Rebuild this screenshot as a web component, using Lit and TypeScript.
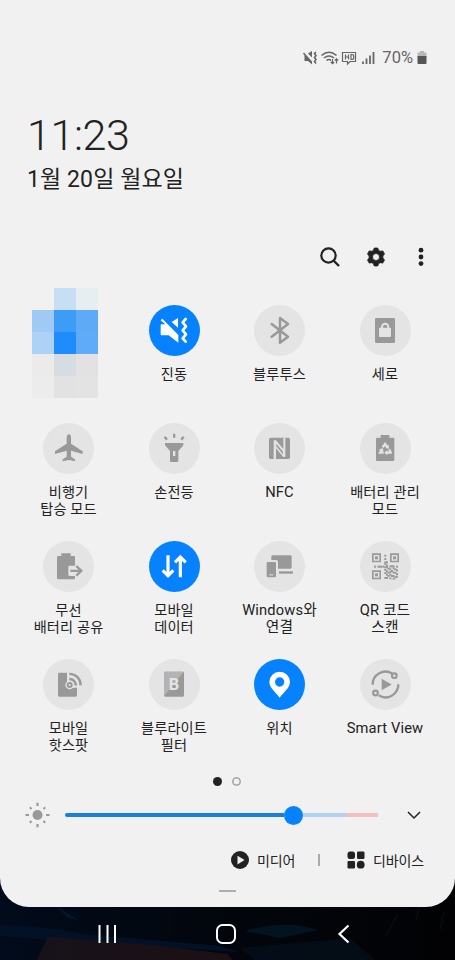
import { LitElement, html, svg, css } from "lit";
import type { SVGTemplateResult } from "lit";
import { customElement, property } from "lit/decorators.js";
import { classMap } from "lit/directives/class-map.js";

/* Tile glyphs share a 153-unit box; "g" is the glyph colour, "b" the disc colour. */
const finder = (x: number, y: number) => svg`
  <path class="g" fill-rule="evenodd" d="M${x} ${y}h27v27h-27zM${x + 5} ${y + 5}v17h17v-17z"/>
  <rect class="g" x="${x + 9}" y="${y + 9}" width="9" height="9"/>`;

const qrDots: number[][] = [
  [73, 41], [73, 51], [73, 61], [78, 61], [73, 66], [78, 71],
  [42, 74], [52, 74], [57, 74], [62, 74], [73, 76], [68, 74],
  [78, 76], [88, 73], [93, 73], [98, 73], [83, 80], [88, 82], [98, 79],
  [108, 74], [103, 82], [108, 85], [73, 84], [78, 88], [73, 93],
  [83, 92], [88, 90], [93, 87], [98, 92], [103, 92], [108, 96],
  [78, 98], [83, 102], [88, 98], [93, 102], [98, 102], [103, 106],
  [73, 108], [78, 108], [88, 109], [98, 110], [108, 104],
];

const glyphs: Record<string, SVGTemplateResult> = {
  vibrate: svg`
    <path class="g" d="M68 51L87 39V68zM37 58H49L35 46L40 41L88 90V113L59 91H37Q35 91 35 88V61Q35 58 37 58z"/>
    <path class="s" stroke-width="8" stroke-linejoin="round" stroke-linecap="round" d="M110 42L101 52L111 64L101 76L111 88L101 100L110 110"/>`,
  bluetooth: svg`<path class="s" stroke-width="7.500" stroke-linejoin="round" stroke-linecap="round" d="M53 57L102 95L78 113V39L102 57L53 95"/>`,
  rotate: svg`
    <rect class="g" x="45" y="39" width="60" height="75" rx="4"/>
    <rect class="b" x="57" y="68" width="36" height="28" rx="2"/>
    <path class="sb" stroke-width="6" d="M66 70V66a9.500 9.500 0 0 1 19 0V70"/>`,
  plane: svg`<path class="g" d="M78 34c5 0 6 6 6 10V62L119 85V93L84 83V101L96 109V115L78 111L59 115V109L71 101V83L36 93V85L71 62V44c0-4 2-10 7-10z"/>`,
  torch: svg`
    <path class="s" stroke-width="7" d="M75.500 32V44M47 41L54 50M104 41L97 50"/>
    <path class="g" fill-rule="evenodd" d="M48 60H103V67L88 84V113Q88 117 84 117H67Q63 117 63 113V84L48 67zM72 84V99H79V84z"/>`,
  nfc: svg`
    <rect class="g" x="45" y="44" width="63" height="64" rx="5"/>
    <path class="b" d="M59 108V52H66L88 78V44H94V102H88L66 76V108z"/>
    <path class="g" d="M67 62L87 86V94L67 70z"/>`,
  care: svg`
    <path class="g" d="M62 36H88V44H100Q103 44 103 47V111Q103 114 100 114H51Q48 114 48 111V47Q48 44 51 44H62z"/>
    <path class="sb" stroke-width="7" d="M68 73L75 63L82 72M88 79L92 89H79M71 89H60L64 80"/>
    <path class="b" d="M76 75L87 77L86 65zM82 81V97L73 89zM57 80L68 75L71 86z"/>`,
  share: svg`
    <path class="g" d="M55 37H83V45H93Q96 45 96 49V111Q96 115 92 115H46Q42 115 42 111V49Q42 45 46 45H55z"/>
    <path class="b" d="M80 74H105V105H80Q76 105 76 101V78Q76 74 80 74z"/>
    <path class="s" stroke-width="7" d="M82 89.500H114M100 75L115 89.500L100 104"/>`,
  data: svg`<path class="s" stroke-width="9.500" d="M57 43V104M41 88L57 104L73 88M94 109V48M78 64L94 48L110 64"/>`,
  windows: svg`
    <rect class="g" x="52" y="43" width="61" height="40" rx="4"/>
    <rect class="b" x="33" y="57" width="39" height="56" rx="6"/>
    <rect class="g" x="38" y="63" width="28" height="46" rx="4"/>
    <rect class="b" x="46" y="100" width="12" height="3"/>
    <rect class="g" x="75" y="91" width="42" height="7"/>`,
  qr: svg`${finder(36, 37)}${finder(90, 37)}${finder(36, 88)}
    ${qrDots.map(([x, y]) => svg`<rect class="g" x="${x}" y="${y}" width="6" height="6"/>`)}`,
  hotspot: svg`
    <path class="g" d="M49 41H72V113H49Q45 113 45 109V45Q45 41 49 41zM70 86H102V109Q102 113 98 113H70z"/>
    <circle class="b" cx="80" cy="78" r="13"/>
    <circle class="s" cx="80" cy="78" r="6" stroke-width="6"/>
    <path class="s" stroke-width="7" d="M79 60A18 18 0 0 1 98 80M79 44.500A33.500 33.500 0 0 1 113 79"/>`,
  filter: svg`
    <rect class="g" x="45" y="38" width="60" height="75" rx="4"/>
    <path fill="#b3b3b3" d="M49 38H104L45 112V42Q45 38 49 38z"/>
    <text class="b letter" x="75" y="94" text-anchor="middle">B</text>`,
  pin: svg`<path class="g" fill-rule="evenodd" d="M77 38A31 31 0 0 1 108 69C108 86 88 101 77 116C66 101 46 86 46 69A31 31 0 0 1 77 38zM77 55A14 14 0 1 0 77 83A14 14 0 1 0 77 55z"/>`,
  smart: svg`
    <path class="s" stroke-width="7" d="M38 77A38.500 38.500 0 0 1 97 44M115 76A38.500 38.500 0 0 1 56 109"/>
    <circle class="s" cx="103" cy="50" r="7" stroke-width="6.500"/>
    <circle class="s" cx="46.500" cy="102" r="7" stroke-width="6.500"/>
    <path class="g" d="M65 59L95 76.500L65 94z"/>`,
};

@customElement("quick-tile")
class QuickTile extends LitElement {
  @property() icon = "";
  @property({ attribute: false }) lines: string[] = [];
  @property({ type: Boolean }) on = false;

  static styles = css`
    :host { display: flex; flex-direction: column; align-items: center; gap: 10px; }
    .disc { display: block; width: 51px; height: 51px; border-radius: 50%; background: #e4e4e4; --g: #999; --b: #e4e4e4; }
    .disc.on { background: #0682fe; --g: #fff; --b: #0682fe; }
    svg { display: block; width: 51px; height: 51px; }
    .g { fill: var(--g); }
    .b { fill: var(--b); }
    .s { fill: none; stroke: var(--g); }
    .sb { fill: none; stroke: var(--b); }
    .letter { font: 700 49px Roboto, sans-serif; }
    .label { text-align: center; white-space: nowrap; font-size: 14.200px; letter-spacing: .15px; line-height: 17px; color: #222; }
    .label.latin { font-size: 14.700px; }
    .line { display: block; }
  `;

  render() {
    const latin = /^[A-Za-z]/.test(this.lines[0] ?? "");
    return html`
      <div class=${classMap({ disc: true, on: this.on })}>
        <svg viewBox="0 0 153 153">${glyphs[this.icon]}</svg>
      </div>
      <div class=${classMap({ label: true, latin })}>${this.lines.map((l) => html`<span class="line">${l}</span>`)}</div>`;
  }
}
void QuickTile;

const tiles = [
  { icon: "vibrate", lines: ["진동"], on: true },
  { icon: "bluetooth", lines: ["블루투스"] },
  { icon: "rotate", lines: ["세로"] },
  { icon: "plane", lines: ["비행기", "탑승 모드"] },
  { icon: "torch", lines: ["손전등"] },
  { icon: "nfc", lines: ["NFC"] },
  { icon: "care", lines: ["배터리 관리", "모드"] },
  { icon: "share", lines: ["무선", "배터리 공유"] },
  { icon: "data", lines: ["모바일", "데이터"], on: true },
  { icon: "windows", lines: ["Windows와", "연결"] },
  { icon: "qr", lines: ["QR 코드", "스캔"] },
  { icon: "hotspot", lines: ["모바일", "핫스팟"] },
  { icon: "filter", lines: ["블루라이트", "필터"] },
  { icon: "pin", lines: ["위치"], on: true },
  { icon: "smart", lines: ["Smart View"] },
];

const mosaic = [
  "transparent", "#c7dff5", "#e7eef2",
  "#9ecaf5", "#3d9cf5", "#5eaaf7",
  "#add2f6", "#1e8dfb", "#60abf9",
  "#ebebec", "#d5dde3", "#e2e2e2",
  "#ececec", "#e2e2e2", "#e3e3e3",
];

@customElement("app-root")
class AppRoot extends LitElement {
  static styles = css`
    :host { display: flex; flex-direction: column; width: 455px; height: 960px; overflow: hidden; position: relative;
      background: #02040a; font-family: Roboto, "Noto Sans CJK KR", sans-serif; color: #222; }
    .wall { position: absolute; left: 0; top: 860px; width: 455px; height: 100px; }
    .panel { position: relative; box-sizing: border-box; height: 907px; padding-top: 40px; display: flex; flex-direction: column;
      background: #f1f1f1; border-radius: 0 0 29px 29px; }
    svg { display: block; flex: none; }
    .status { height: 35px; padding-right: 28px; display: flex; align-items: center; justify-content: flex-end; color: #666; }
    .pct { font-size: 16.500px; line-height: 20px; margin: 0 4px 0 1px; }
    .clock { margin: 38px 0 0 27px; height: 44px; line-height: 44px; font-size: 43px; letter-spacing: -.4px; font-weight: 300; }
    .date { margin: 9px 0 0 27px; height: 28px; line-height: 28px; font-size: 23px; letter-spacing: .1px; }
    .tools { margin-top: 43px; height: 40px; display: flex; align-items: center; justify-content: flex-end; padding-right: 22px; gap: 21.500px; }
    .tiles { margin: 28px 0 0 15.750px; display: grid; grid-template-columns: repeat(4, 105.500px); grid-template-rows: 118px 118px 118px 105px; }
    .mosaic { margin: -17px 0 0 16.250px; width: 66px; height: 110px; display: grid; grid-template-columns: repeat(3, 22px); grid-auto-rows: 22px; }
    .pages { height: 34px; display: flex; align-items: center; justify-content: center; gap: 10px; padding-right: 1px; }
    .dot { box-sizing: border-box; width: 9px; height: 9px; border-radius: 50%; background: #222; }
    .dot.hollow { background: none; border: 1.500px solid #999; border-width: 1.5px; box-shadow: inset 0 0 0 .5px #999; }
    .bright { height: 34px; display: flex; align-items: center; padding-left: 25px; }
    .track { margin-left: 15px; width: 313px; height: 4px; display: flex; align-items: center; }
    .seg { height: 4px; }
    .seg.full { width: 219px; background: #1b7ed8; border-radius: 2px 0 0 2px; }
    .thumb { flex: none; width: 19px; height: 19px; border-radius: 50%; background: #0682fe; }
    .seg.rest { width: 43px; background: #b3d0ec; }
    .seg.hot { width: 32px; background: #f0c1be; }
    .chev { margin-left: 29px; }
    .links { height: 56px; display: flex; align-items: center; justify-content: flex-end; padding-right: 31px; font-size: 14px; letter-spacing: -.1px; }
    .links span { line-height: 20px; position: relative; top: .5px; }
    .media { margin-left: 8px; }
    .bar { width: 1.500px; height: 12px; background: #aaa; margin: 0 27px 0 23px; }
    .device { margin-left: 8px; }
    .handle { align-self: center; width: 17px; height: 2px; margin-top: 2px; background: #aeaeae; }
    .nav { position: relative; height: 53px; padding: 0 101px 0 97px; display: flex; align-items: center; justify-content: space-between; }
  `;

  render() {
    return html`
      <svg class="wall" viewBox="0 0 455 100">
        <defs>
          <linearGradient id="sky" x1="0" x2="1"><stop offset="0" stop-color="#020b1b"/><stop offset=".5" stop-color="#02060c"/><stop offset="1" stop-color="#020204"/></linearGradient>
          <linearGradient id="desk" x1="0" x2="1"><stop offset="0" stop-color="#17121a"/><stop offset="1" stop-color="#1c1012"/></linearGradient>
        </defs>
        <rect width="455" height="100" fill="url(#sky)"/>
        <path fill="#031126" d="M0 65Q45 66 85 74L220 86L240 92L50 80L0 76z"/>
        <path fill="#04172a" d="M55 45L78 60L68 58z"/>
        <path fill="#031421" d="M245 71Q285 59 318 70L280 78z"/>
        <path fill="#07182a" d="M240 88L350 78L375 100H255z" opacity=".4"/>
        <path fill="url(#desk)" d="M48 77L150 85L228 94L232 100H37z"/>
        <path stroke="#0b1726" stroke-width="2" opacity=".4" d="M398 54L386 76M420 42L416 60M444 52L440 70"/>
      </svg>
      <div class="panel">
        <div class="status">
          <svg width="79" height="20" viewBox="0 0 79 20">
            <g fill="none" stroke="#666" stroke-width="1.200">
              <path fill="#666" stroke="none" d="M6 5.500L10 3V9.500zM2.500 7.500L1 5.500L2 4.500L10 13.500V16.500L6 13H2.500z"/>
              <path stroke-width="1.600" d="M14 4L12.500 5.500L14 7.500L12.500 9.500L14 11.500L12.500 13.500L14 15.500"/>
              <path stroke-width="1.600" d="M19.500 7.500Q27 1 34.500 7.500M22 10Q27 6 32 10M24.500 12.500Q27 10.500 29 12.500"/>
              <path d="M30.500 11V15.500M28.800 14L30.500 15.700L32.200 14M34.500 15.500V11M32.800 12.500L34.500 10.800L36.200 12.500"/>
              <path d="M40.500 4.500H53.500V13.500H48L45.500 16V13.500H40.500z"/>
              <path stroke-width="1.200" d="M43.500 6.500V11.500M46.500 6.500V11.500M43.500 9H46.500M49 6.500V11.500H50Q51.800 11.500 51.800 9T50 6.500z"/>
              <path stroke-width="1.800" d="M61 16V13.500M64.500 16V10.500M68 16V7.500M71.500 16V4"/>
            </g>
          </svg>
          <span class="pct">70%</span>
          <svg width="10" height="14" viewBox="0 0 10 14"><path fill="#b8b8b8" d="M3 0H7V1.500H9.500V6H.5V1.500H3z"/><path fill="#555" d="M.5 5H9.500V12Q9.500 13 8.500 13H1.500Q.5 13 .5 12z"/></svg>
        </div>
        <div class="clock">11:23</div>
        <div class="date">1월 20일 월요일</div>
        <div class="tools">
          <svg width="24" height="24" viewBox="0 0 24 24"><g fill="none" stroke="#222" stroke-width="2.200"><circle cx="10.500" cy="10.500" r="7.200"/><path stroke-width="2.400" d="M15.500 15.500L21 21"/></g></svg>
          <svg width="24" height="24" viewBox="0 0 24 24"><path fill="#222" fill-rule="evenodd" d="M10.300 3H13.700L14.700 5.400L16.200 6.300L18.800 5.900L20.500 8.900L18.900 10.900V13.100L20.500 15.100L18.800 18.100L16.200 17.700L14.700 18.600L13.700 21H10.300L9.300 18.600L7.800 17.700L5.200 18.100L3.500 15.100L5.100 13.100V10.900L3.500 8.900L5.200 5.900L7.800 6.300L9.300 5.400zM12 8.500A3.500 3.500 0 1 0 12 15.500A3.500 3.500 0 1 0 12 8.500z" stroke="#222" stroke-width=".8" stroke-linejoin="round"/></svg>
          <svg width="24" height="24" viewBox="0 0 24 24"><g fill="#222"><circle cx="12" cy="5.200" r="2.400"/><circle cx="12" cy="12" r="2.400"/><circle cx="12" cy="18.600" r="2.400"/></g></svg>
        </div>
        <div class="tiles">
          <div class="mosaic">${mosaic.map((c) => html`<i style="background:${c}"></i>`)}</div>
          ${tiles.map((t) => html`<quick-tile .icon=${t.icon} .lines=${t.lines} .on=${!!t.on}></quick-tile>`)}
        </div>
        <div class="pages"><i class="dot"></i><i class="dot hollow"></i></div>
        <div class="bright">
          <svg width="25" height="26" viewBox="-12.500 -13 25 26"><circle r="5" fill="#999"/><g stroke="#999" stroke-width="2.200"><path d="M0 -12.300V-9M0 9V12.300M-12 0H-8.500M8.500 0H12"/><path stroke-width="2" d="M-7.700 -7.700L-6 -6M7.700 -7.700L6 -6M-7.700 7.700L-6 6M7.700 7.700L6 6"/></g></svg>
          <div class="track"><i class="seg full"></i><i class="thumb"></i><i class="seg rest"></i><i class="seg hot"></i></div>
          <svg class="chev" width="14" height="10" viewBox="0 0 14 10"><path fill="none" stroke="#222" stroke-width="1.500" d="M1 2L7 8L13 2"/></svg>
        </div>
        <div class="links">
          <svg width="18" height="18" viewBox="0 0 18 18"><circle cx="9" cy="9" r="9" fill="#222"/><path fill="#f1f1f1" d="M6.500 4.800L13.500 9L6.500 13.500z"/></svg>
          <span class="media">미디어</span><i class="bar"></i>
          <svg width="18" height="18" viewBox="0 0 18 18"><g fill="#222"><rect x=".5" y=".5" width="7.500" height="7.500" rx="2.500"/><rect x="10" y=".5" width="7.500" height="7.500" rx="1.200"/><rect x=".5" y="10" width="7.500" height="7.500" rx="1.200"/><circle cx="13.700" cy="13.700" r="3.900"/></g></svg>
          <span class="device">디바이스</span>
        </div>
        <i class="handle"></i>
      </div>
      <div class="nav">
        <svg width="20" height="20" viewBox="0 0 20 20"><path stroke="#fff" stroke-width="2" d="M2.500 1V19M10.500 1V19M18 1V19"/></svg>
        <svg width="20" height="20" viewBox="0 0 20 20"><rect x="1" y="1" width="18" height="18" rx="5.500" fill="none" stroke="#fff" stroke-width="2"/></svg>
        <svg width="20" height="20" viewBox="0 0 20 20"><path fill="none" stroke="#fff" stroke-width="2.200" d="M14.500 1.500L5.500 10L14.500 18.500"/></svg>
      </div>`;
  }
}
void AppRoot;
